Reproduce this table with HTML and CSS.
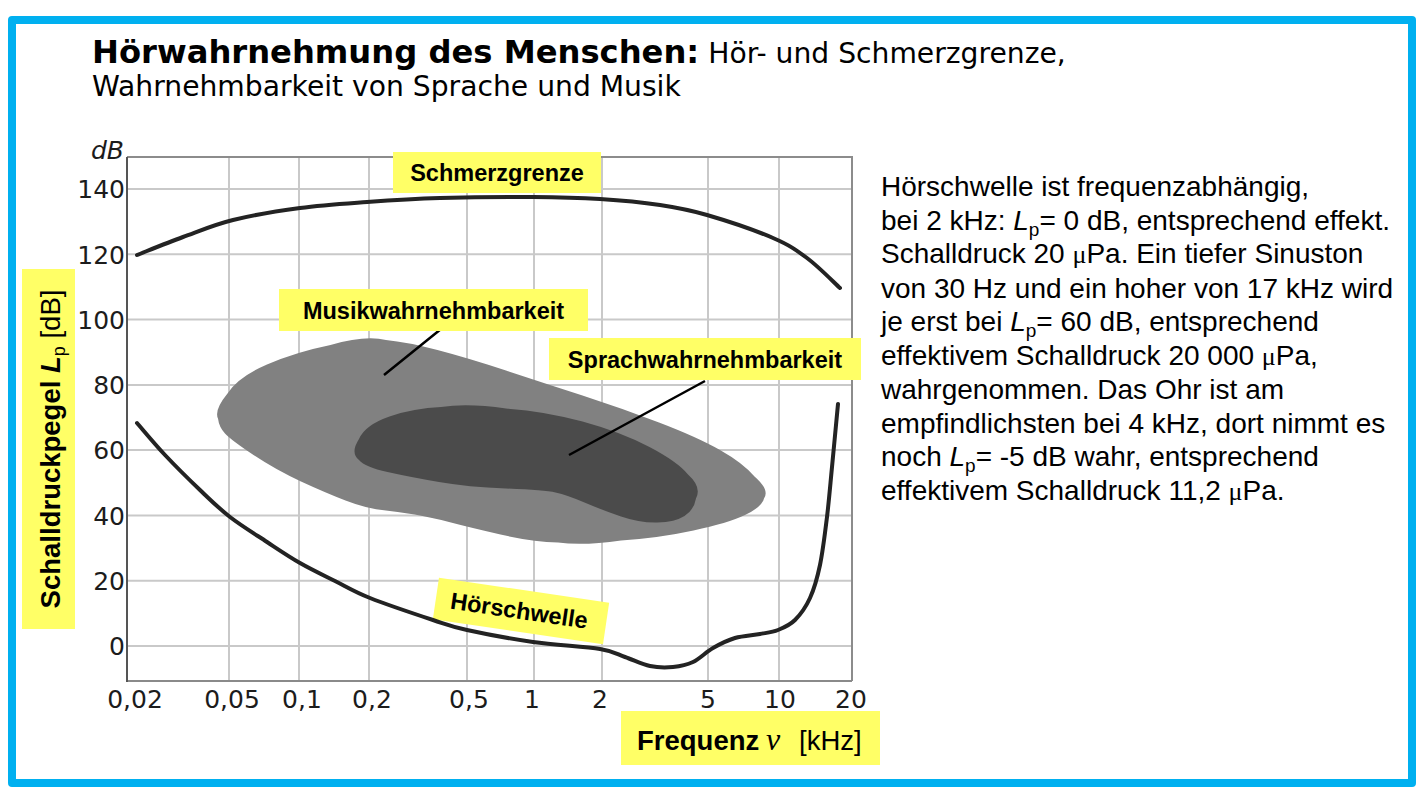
FILE: index.html
```html
<!DOCTYPE html>
<html lang="de">
<head>
<meta charset="utf-8">
<title>Hörwahrnehmung des Menschen</title>
<link rel="stylesheet" href="styles.css">
</head>
<body>
<div class="frame">
  <div class="title"><span class="title-bold">Hörwahrnehmung des Menschen:</span> Hör- und Schmerzgrenze,<br>Wahrnehmbarkeit von Sprache und Musik</div>
  <div class="content">
    <svg class="chart" viewBox="16 130 865 645" width="865" height="645" xmlns="http://www.w3.org/2000/svg">
      <path class="grid" d="M229 157V681M299 157V681M369 157V681M467 157V681M534 157V681M602 157V681M708 157V681M779 157V681"/>
      <path class="grid" d="M127 189H852M127 254.3H852M127 319.6H852M127 384.9H852M127 450.1H852M127 515.4H852M127 580.7H852M127 646H852"/>
      <path class="border-line" d="M127 157H852V681"/>
      <path class="axis-bottom" d="M127 681H852"/>
      <path class="axis-left" d="M127 157V682"/>

      <path class="music" d="M218,418.5 Q214,410 227.5,393.5 Q238,377 267,364.5 Q296,352 330.5,345 Q365,335 386,340 Q407,342 437.5,350 Q468,358 506,370.5 Q544,383 582.5,395.5 Q621,408 659,422.5 Q697,437 720,450 Q743,463 754.5,476.5 Q770,490 764,498.5 Q762,507 745,515 Q728,523 693.5,530.5 Q659,538 621,540.5 Q583,546 558,542.5 Q533,542 500.5,534.5 Q468,527 449,522 Q430,517 414.5,514.5 Q399,512 382,510 Q365,508 345.5,500.5 Q326,493 301,481.5 Q276,470 253.5,455 Q231,440 225,433.5 Q219,427 218,418.5 Z"/>
      <path class="speech" d="M359,460 Q350,453 359,439 Q365,425 389.5,416.5 Q414,408 441,407 Q468,403 506,408.5 Q544,411 582.5,421.5 Q621,432 649.5,447 Q678,462 688,474.5 Q702,487 696,498.5 Q694,510 684.5,516 Q675,522 657.5,522.5 Q640,523 621,516.5 Q602,510 584.5,502.5 Q567,495 555.5,492.5 Q544,490 506,488.5 Q468,487 439,482 Q410,477 387.5,472 Q365,467 359,460 Z"/>

      <path class="leader" d="M441 329L384 375M705 381L569 455"/>

      <rect class="label-bg" x="393" y="152" width="208" height="41"/>
      <text class="label" x="497" y="180.5">Schmerzgrenze</text>
      <rect class="label-bg" x="279" y="289" width="309" height="42"/>
      <text class="label" x="433.5" y="318.5">Musikwahrnehmbarkeit</text>
      <rect class="label-bg" x="549" y="338" width="312" height="42"/>
      <text class="label" x="705" y="367.5">Sprachwahrnehmbarkeit</text>
      <g transform="translate(521 611) rotate(8.4)">
        <rect class="label-bg" x="-86" y="-21" width="172" height="42"/>
        <text class="label" x="-2" y="8">Hörschwelle</text>
      </g>

      <path class="curve" d="M137,255 C144.7,252 167,242.8 183,237 C199,231.2 213.5,224.8 233,220 C252.5,215.2 277.7,211 300,208 C322.3,205 343.7,203.7 367,202 C390.3,200.3 412.3,198.8 440,198 C467.7,197.2 506.3,196.8 533,197 C559.7,197.2 578.8,197.7 600,199 C621.2,200.3 642.2,202.3 660,205 C677.8,207.7 688.2,209.5 707,215 C725.8,220.5 756.3,230.8 773,238 C789.7,245.2 795.8,249.7 807,258 C818.2,266.3 834.5,283 840,288"/>
      <path class="curve" d="M137,423 C141.67,428.33 154.5,443.83 165,455 C175.5,466.17 189.17,479.67 200,490 C210.83,500.33 218.83,508.33 230,517 C241.17,525.67 255.33,534.33 267,542 C278.67,549.67 288.67,556.5 300,563 C311.33,569.5 323.33,575.17 335,581 C346.67,586.83 353.67,591.5 370,598 C386.33,604.5 416.83,614.67 433,620 C449.17,625.33 450.33,626.33 467,630 C483.67,633.67 510.83,638.83 533,642 C555.17,645.17 584.67,646.5 600,649 C615.33,651.5 616.67,654.17 625,657 C633.33,659.83 642,664.33 650,666 C658,667.67 665.83,667.67 673,667 C680.17,666.33 686.33,665.17 693,662 C699.67,658.83 706,652 713,648 C720,644 727.17,640.33 735,638 C742.83,635.67 752.83,635.33 760,634 C767.17,632.67 772.17,632.33 778,630 C783.83,627.67 789.67,625.33 795,620 C800.33,614.67 805.83,607.17 810,598 C814.17,588.83 817.17,578.5 820,565 C822.83,551.5 825,533.33 827,517 C829,500.67 830.17,485.83 832,467 C833.83,448.17 837,414.5 838,404"/>

      <text class="tick tick-unit" x="124" y="159">dB</text>
      <text class="tick tick-y" x="125" y="198">140</text>
      <text class="tick tick-y" x="125" y="263.5">120</text>
      <text class="tick tick-y" x="125" y="328.7">100</text>
      <text class="tick tick-y" x="125" y="394">80</text>
      <text class="tick tick-y" x="125" y="459.2">60</text>
      <text class="tick tick-y" x="125" y="524.5">40</text>
      <text class="tick tick-y" x="125" y="589.8">20</text>
      <text class="tick tick-y" x="125" y="655.1">0</text>

      <text class="tick tick-x" x="135" y="708">0,02</text>
      <text class="tick tick-x" x="232" y="708">0,05</text>
      <text class="tick tick-x" x="302" y="708">0,1</text>
      <text class="tick tick-x" x="372" y="708">0,2</text>
      <text class="tick tick-x" x="469" y="708">0,5</text>
      <text class="tick tick-x" x="532" y="708">1</text>
      <text class="tick tick-x" x="600" y="708">2</text>
      <text class="tick tick-x" x="708" y="708">5</text>
      <text class="tick tick-x" x="780" y="708">10</text>
      <text class="tick tick-x" x="851" y="708">20</text>

      <rect class="label-bg" x="22" y="269" width="53" height="360"/>
      <g transform="translate(60 449) rotate(-90)">
        <text class="axis-title" x="0" y="0">Schalldruckpegel <tspan class="it">L</tspan><tspan class="sub-p" dy="5">p</tspan><tspan class="reg" dy="-5"> [dB]</tspan></text>
      </g>

      <rect class="label-bg" x="621" y="711" width="259" height="54"/>
      <text class="axis-title axis-x" x="637" y="750">Frequenz<tspan class="nu" x="766">ν</tspan><tspan class="reg" x="799">[kHz]</tspan></text>
    </svg>
    <div class="desc">
      <div class="line">Hörschwelle ist frequenzabhängig,</div>
      <div class="line">bei 2 kHz: <i class="sym">L</i><sub class="sub">p</sub>= 0 dB, entsprechend effekt.</div>
      <div class="line">Schalldruck 20 <span class="mu">μ</span>Pa. Ein tiefer Sinuston</div>
      <div class="line">von 30 Hz und ein hoher von 17 kHz wird</div>
      <div class="line">je erst bei <i class="sym">L</i><sub class="sub">p</sub>= 60 dB, entsprechend</div>
      <div class="line">effektivem Schalldruck 20 000 <span class="mu">μ</span>Pa,</div>
      <div class="line">wahrgenommen. Das Ohr ist am</div>
      <div class="line">empfindlichsten bei 4 kHz, dort nimmt es</div>
      <div class="line">noch <i class="sym">L</i><sub class="sub">p</sub>= -5 dB wahr, entsprechend</div>
      <div class="line">effektivem Schalldruck 11,2 <span class="mu">μ</span>Pa.</div>
    </div>
  </div>
</div>
</body>
</html>
```
FILE: styles.css
```css
html, body {
  margin: 0;
  padding: 0;
  background: #ffffff;
}

body {
  width: 1423px;
  height: 800px;
  overflow: hidden;
  font-family: "DejaVu Sans", sans-serif;
  color: #000000;
}

.frame {
  box-sizing: border-box;
  width: 1408px;
  height: 771px;
  margin: 16px 0 0 8px;
  border: 8px solid #00b0f0;
  border-radius: 4px;
  background: #ffffff;
}

.title {
  box-sizing: border-box;
  height: 106px;
  padding: 12px 0 0 76px;
  font-family: "DejaVu Sans", sans-serif;
  font-size: 28.2px;
  line-height: 33px;
  white-space: nowrap;
}

.title-bold {
  font-weight: bold;
  font-size: 32.2px;
}

.content {
  display: flex;
}

.chart {
  display: block;
  flex: none;
  width: 865px;
  height: 645px;
}

.grid {
  fill: none;
  stroke: #c9c9c9;
  stroke-width: 2;
}

.border-line {
  fill: none;
  stroke: #8c8c8c;
  stroke-width: 2;
}

.axis-bottom {
  fill: none;
  stroke: #8a8a8a;
  stroke-width: 2;
}

.axis-left {
  fill: none;
  stroke: #555555;
  stroke-width: 2;
}

.music {
  fill: #818181;
}

.speech {
  fill: #4b4b4b;
}

.leader {
  fill: none;
  stroke: #000000;
  stroke-width: 2.5;
}

.curve {
  fill: none;
  stroke: #232323;
  stroke-width: 4;
  stroke-linecap: round;
  stroke-linejoin: round;
}

.label-bg {
  fill: #ffff66;
}

.label {
  font-family: "Liberation Sans", Arial, sans-serif;
  font-weight: bold;
  font-size: 23.5px;
  fill: #000000;
  text-anchor: middle;
}

.tick {
  font-family: "DejaVu Sans", sans-serif;
  font-size: 25px;
  fill: #1c1c1c;
}

.tick-y,
.tick-unit {
  text-anchor: end;
}

.tick-unit {
  font-style: italic;
}

.tick-x {
  text-anchor: middle;
}

.axis-title {
  font-family: "Liberation Sans", Arial, sans-serif;
  font-weight: bold;
  font-size: 27.5px;
  fill: #000000;
  text-anchor: middle;
}

.axis-x {
  font-size: 27.5px;
  text-anchor: start;
}

.axis-title .it {
  font-style: italic;
}

.axis-title .sub-p {
  font-size: 18px;
  font-weight: normal;
}

.axis-title .reg {
  font-weight: normal;
}

.axis-title .nu {
  font-family: "Liberation Serif", "Times New Roman", serif;
  font-style: italic;
  font-weight: normal;
  font-size: 32px;
}

.desc {
  padding-top: 40px;
  font-family: "Liberation Sans", Arial, sans-serif;
  font-size: 28px;
  line-height: 33.5px;
  color: #000000;
}

.line {
  white-space: nowrap;
}

.sym {
  font-style: italic;
}

.sub {
  font-size: 19px;
  line-height: 0;
  vertical-align: -6px;
}

.mu {
  font-family: "Liberation Serif", "Times New Roman", serif;
  font-size: 26px;
}
```
